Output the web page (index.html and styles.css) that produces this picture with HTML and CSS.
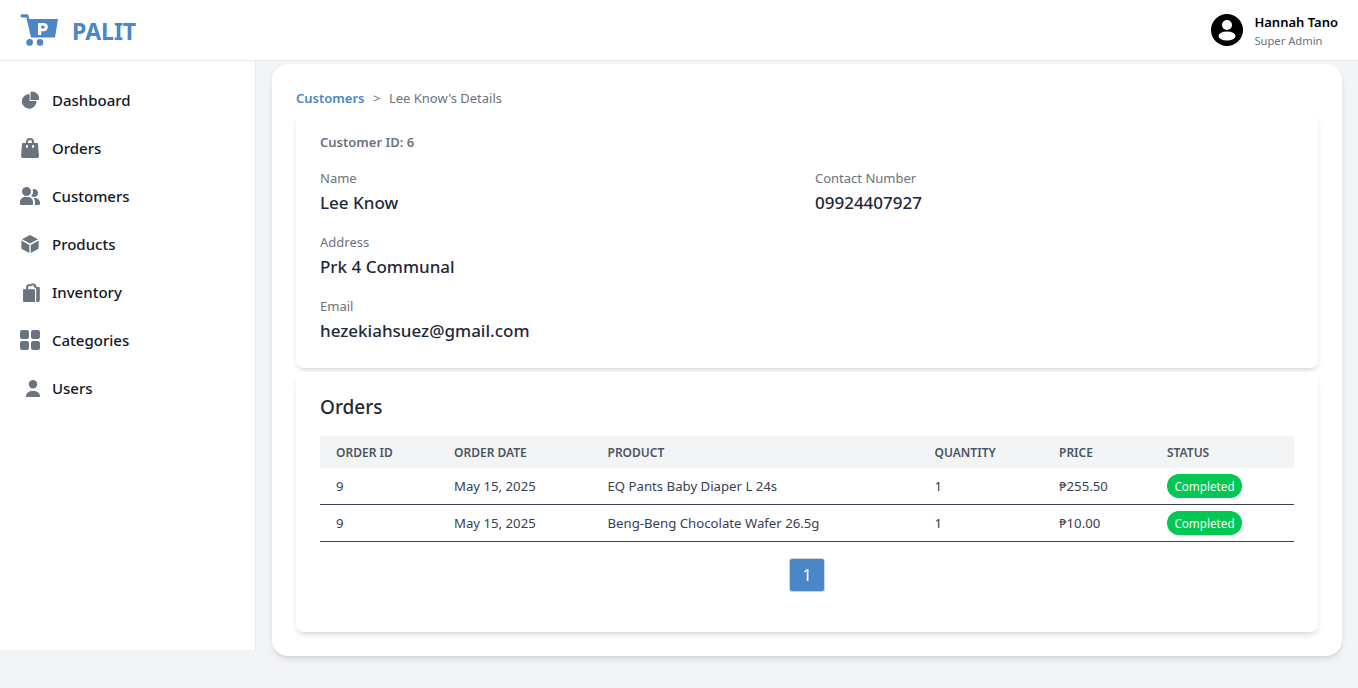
FILE: index.html
```html
<!DOCTYPE html>
<html lang="en">
<head>
    <meta charset="UTF-8">
    <meta name="viewport" content="width=device-width, initial-scale=1.0">
    <title>Customer Details</title>
    <link rel="stylesheet" href="styles.css">
</head>
<body>
    <header class="topbar">
        <a class="brand" href="#">
            <svg class="brand-logo" viewBox="0 0 38 32">
                <path d="M2 .2h4.8c.8 0 1.4.4 1.7 1.2L9.3 5H38l-3 18.6H11L6.4 3.4H2a1.6 1.6 0 0 1 0-3.2z" fill="#4a86c8"/>
                <circle cx="9.6" cy="28.4" r="3.3" fill="#4a86c8"/>
                <circle cx="20" cy="28.4" r="3.3" fill="#4a86c8"/>
                <path d="M18 9h5.6c2.7 0 4.2 1.6 4.2 4s-1.5 4.2-4.2 4.2h-2.4V21H18zm3.2 2.7v2.9h2c1 0 1.5-.6 1.5-1.5s-.5-1.4-1.5-1.4z" fill="#fff"/>
            </svg>
            <span class="brand-name">PALIT</span>
        </a>
        <div class="account">
            <svg class="account-icon" viewBox="0 0 32 32">
                <circle cx="16" cy="16" r="16" fill="#000"/>
                <circle cx="16" cy="11" r="5" fill="#fff"/>
                <ellipse cx="16" cy="22" rx="8.5" ry="4.6" fill="#fff"/>
            </svg>
            <div class="account-text">
                <div class="account-name">Hannah Tano</div>
                <div class="account-role">Super Admin</div>
            </div>
        </div>
    </header>

    <div class="layout">
        <nav class="sidebar">
            <a class="nav-item" href="#">
                <span class="nav-icon"><svg width="19" height="19" viewBox="0 0 22 21"><path d="M16.975 11H10V4.025a1 1 0 0 0-1.066-.998 8.5 8.5 0 1 0 9.039 9.039.999.999 0 0 0-1-1.066h.002Z"/><path d="M12.5 0c-.157 0-.311.01-.565.027A1 1 0 0 0 11 1.02V10h8.975a1 1 0 0 0 1-.935c.013-.188.028-.374.028-.565A8.51 8.51 0 0 0 12.5 0Z"/></svg></span>
                Dashboard
            </a>
            <a class="nav-item" href="#">
                <span class="nav-icon"><svg width="18" height="20" viewBox="0 0 18 20"><path d="M17 5.923A1 1 0 0 0 16 5h-3V4a4 4 0 1 0-8 0v1H2a1 1 0 0 0-1 .923L.086 17.846A2 2 0 0 0 2.08 20h13.84a2 2 0 0 0 1.994-2.153L17 5.923ZM7 9a1 1 0 0 1-2 0V7h2v2Zm0-5a2 2 0 1 1 4 0v1H7V4Zm6 5a1 1 0 1 1-2 0V7h2v2Z"/></svg></span>
                Orders
            </a>
            <a class="nav-item" href="#">
                <span class="nav-icon"><svg width="20" height="18" viewBox="0 0 20 18"><path d="M14 2a3.963 3.963 0 0 0-1.4.267 6.439 6.439 0 0 1-1.331 6.638A4 4 0 1 0 14 2Zm1 9h-1.264A6.957 6.957 0 0 1 15 15v2a2.97 2.97 0 0 1-.184 1H19a1 1 0 0 0 1-1v-1a5.006 5.006 0 0 0-5-5ZM6.5 9a4.5 4.5 0 1 0 0-9 4.5 4.5 0 0 0 0 9ZM8 10H5a5.006 5.006 0 0 0-5 5v2a1 1 0 0 0 1 1h11a1 1 0 0 0 1-1v-2a5.006 5.006 0 0 0-5-5Z"/></svg></span>
                Customers
            </a>
            <a class="nav-item" href="#">
                <span class="nav-icon"><svg width="18" height="18" viewBox="0 0 18 18"><path d="M9 0l8 4.2L9 8.6 1 4.2z"/><path d="M.4 5.6l7.9 4.3V18L.9 14.1a1 1 0 0 1-.5-.9z"/><path d="M17.6 5.6L9.7 9.9V18l7.4-3.9a1 1 0 0 0 .5-.9z"/></svg></span>
                Products
            </a>
            <a class="nav-item" href="#">
                <span class="nav-icon"><svg class="icon-inventory" width="17" height="20" viewBox="0 0 17 20"><path d="M0 8.2c0-.6.4-1 1-1h2V5.6a3.6 3.6 0 0 1 6.9-1.4H8.2A2 2 0 0 0 5 5.6v1.6h6c.6 0 1 .4 1 1V20H1a1 1 0 0 1-1-1z"/><path d="M7 2.2A4 4 0 0 1 13.6 5v-.1h2.2c.6 0 1 .4 1 1V18a2 2 0 0 1-2 2h-1.6V7.2c0-1-.8-1.8-1.8-1.8h-.2A4 4 0 0 0 7 2.2z"/></svg></span>
                Inventory
            </a>
            <a class="nav-item" href="#">
                <span class="nav-icon"><svg width="20" height="20" viewBox="0 0 20 20"><rect width="9" height="9" rx="2.2"/><rect x="11" width="9" height="9" rx="2.2"/><rect y="11" width="9" height="9" rx="2.2"/><rect x="11" y="11" width="9" height="9" rx="2.2"/></svg></span>
                Categories
            </a>
            <a class="nav-item" href="#">
                <span class="nav-icon"><svg class="icon-user" width="14" height="17" viewBox="0 0 14 17"><circle cx="7" cy="4.2" r="4.2"/><path d="M0 17c0-4.2 2.8-6 7-6s7 1.8 7 6z"/></svg></span>
                Users
            </a>
        </nav>

        <main class="main">
            <div class="panel">
                <div class="breadcrumb">
                    <a href="#">Customers</a>
                    <span class="crumb-sep">&gt;</span>
                    <span>Lee Know's Details</span>
                </div>

                <section class="card details">
                    <p class="customer-id">Customer ID: 6</p>
                    <div class="detail-grid">
                        <div>
                            <div class="detail-label">Name</div>
                            <div class="detail-value">Lee Know</div>
                        </div>
                        <div>
                            <div class="detail-label">Contact Number</div>
                            <div class="detail-value">09924407927</div>
                        </div>
                        <div class="detail-wide">
                            <div class="detail-label">Address</div>
                            <div class="detail-value">Prk 4 Communal</div>
                        </div>
                        <div class="detail-wide">
                            <div class="detail-label">Email</div>
                            <div class="detail-value">hezekiahsuez@gmail.com</div>
                        </div>
                    </div>
                </section>

                <section class="card orders">
                    <h2 class="orders-title">Orders</h2>
                    <table class="orders-table">
                        <thead>
                            <tr>
                                <th class="col-id">Order ID</th>
                                <th class="col-date">Order Date</th>
                                <th class="col-product">Product</th>
                                <th class="col-qty">Quantity</th>
                                <th class="col-price">Price</th>
                                <th>Status</th>
                            </tr>
                        </thead>
                        <tbody>
                            <tr>
                                <td>9</td>
                                <td>May 15, 2025</td>
                                <td>EQ Pants Baby Diaper L 24s</td>
                                <td>1</td>
                                <td>₱255.50</td>
                                <td><span class="badge">Completed</span></td>
                            </tr>
                            <tr>
                                <td>9</td>
                                <td>May 15, 2025</td>
                                <td>Beng-Beng Chocolate Wafer 26.5g</td>
                                <td>1</td>
                                <td>₱10.00</td>
                                <td><span class="badge">Completed</span></td>
                            </tr>
                        </tbody>
                    </table>
                    <div class="pagination">
                        <button class="page-btn">1</button>
                    </div>
                </section>
            </div>
        </main>
    </div>
</body>
</html>
```

FILE: styles.css
```css
* {
    box-sizing: border-box;
}
body {
    margin: 0;
    height: 688px;
    overflow: hidden;
    background-color: #f3f4f6;
    color: #1f2937;
    font-family: "Noto Sans", Arial, sans-serif;
}
a {
    text-decoration: none;
}
.topbar {
    height: 61px;
    background: white;
    border-bottom: 1px solid #e5e7eb;
    display: flex;
    justify-content: space-between;
    align-items: center;
    padding: 0 20px;
}
.brand {
    display: flex;
    align-items: center;
    gap: 14px;
}
.brand-logo {
    width: 38px;
    height: 32px;
}
.brand-name {
    color: #4a86c8;
    font-size: 23px;
    font-weight: 700;
    padding-top: 2px;
}
.account {
    display: flex;
    align-items: center;
    gap: 11px;
}
.account-icon {
    width: 32px;
    height: 32px;
}
.account-text {
    padding-top: 2px;
}
.account-name {
    color: #000;
    font-size: 13px;
    font-weight: 600;
    line-height: 20px;
}
.account-role {
    color: #6b7280;
    font-size: 11.2px;
    line-height: 18px;
}
.layout {
    display: flex;
    align-items: flex-start;
}
.sidebar {
    width: 256px;
    height: 589px;
    background: white;
    border-right: 1px solid #e5e7eb;
    padding: 15px 20px;
}
.nav-item {
    display: flex;
    align-items: center;
    height: 48px;
    gap: 12px;
    color: #111827;
    font-size: 15px;
    font-weight: 500;
}
.nav-icon {
    width: 20px;
    display: flex;
    justify-content: center;
}
.nav-icon svg {
    fill: #6b7280;
    display: block;
}
.icon-inventory {
    margin-left: 3px;
}
.icon-user {
    margin-left: 6px;
}
.main {
    flex: 1;
    padding: 3px 16px 0;
}
.panel {
    background: white;
    border-radius: 16px;
    box-shadow: 0 4px 6px -1px rgba(0, 0, 0, 0.1), 0 2px 4px -2px rgba(0, 0, 0, 0.1);
    padding: 24px;
    height: 592px;
}
.breadcrumb {
    display: flex;
    align-items: center;
    gap: 8.5px;
    height: 20px;
    font-size: 13px;
    color: #6b7280;
}
.breadcrumb a {
    color: #4a86c8;
    font-weight: 600;
}
.card {
    background: white;
    border-radius: 8px;
    box-shadow: 0 4px 6px -1px rgba(0, 0, 0, 0.1), 0 2px 4px -2px rgba(0, 0, 0, 0.1);
    padding: 0 24px;
}
.details {
    margin-top: 4px;
    height: 256px;
    padding-top: 20px;
}
.customer-id {
    margin: 0 0 16px;
    font-size: 13px;
    font-weight: 600;
    line-height: 20px;
    color: #6b7280;
}
.detail-grid {
    display: grid;
    grid-template-columns: 1fr 1fr;
    column-gap: 16px;
    row-gap: 15px;
}
.detail-wide {
    grid-column: 1 / 3;
}
.detail-label {
    color: #6b7280;
    font-size: 13px;
    line-height: 20px;
}
.detail-value {
    margin-top: 1px;
    color: #1f2937;
    font-size: 17px;
    font-weight: 500;
    line-height: 28px;
}
.orders {
    margin-top: 4px;
    height: 260px;
    padding-top: 21px;
}
.orders-title {
    margin: 0 0 15px;
    font-size: 19px;
    font-weight: 500;
    line-height: 28px;
}
.orders-table {
    width: 100%;
    border-collapse: separate;
    border-spacing: 0;
    table-layout: fixed;
    font-size: 13.2px;
}
.orders-table th {
    height: 32px;
    padding: 0 16px;
    background-color: #f3f4f6;
    color: #4b5563;
    font-size: 12px;
    font-weight: 600;
    text-align: left;
    text-transform: uppercase;
}
.col-id {
    width: 118px;
}
.col-date {
    width: 153.5px;
}
.col-product {
    width: 327px;
}
.col-qty {
    width: 124.5px;
}
.col-price {
    width: 108px;
}
.orders-table td {
    height: 37px;
    padding: 0 16px;
    border-bottom: 1px solid #374151;
    color: #374151;
}
.badge {
    display: inline-block;
    width: 75px;
    height: 24px;
    border-radius: 12px;
    background-color: #00c853;
    color: white;
    font-size: 11.7px;
    line-height: 25px;
    text-align: center;
    vertical-align: middle;
}
.pagination {
    display: flex;
    justify-content: center;
    margin-top: 16px;
}
.page-btn {
    width: 36px;
    height: 34px;
    border: 1px solid #d1d5db;
    border-radius: 3px;
    background-color: #4a86c8;
    color: white;
    font-family: inherit;
    font-size: 16px;
}
```
